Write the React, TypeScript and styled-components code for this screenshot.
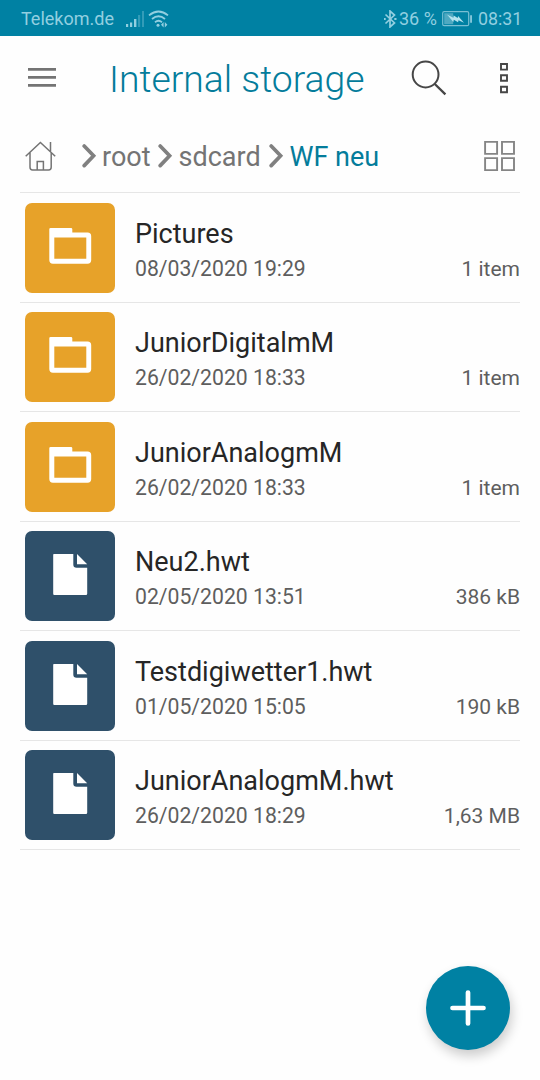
import React from "react";
import styled, { createGlobalStyle } from "styled-components";

const Global = createGlobalStyle`
  * { box-sizing: border-box; }
  body { margin: 0; background: #fefefe; font-family: Roboto, "Liberation Sans", sans-serif; }
  svg { display: block; flex: none; }
`;

const Screen = styled.main`
  height: 1080px;
  width: 540px;
  display: flex;
  flex-direction: column;
  overflow: hidden;
  background: #fefefe;
`;

const StatusBar = styled.div`
  height: 36px;
  flex: none;
  display: flex;
  align-items: center;
  padding: 2px 18px 0 21px;
  background: #0081a3;
  color: #92cfe0;
  font-size: 18px;
  line-height: 22px;
  white-space: nowrap;
`;

const Carrier = styled.span`
  width: 105px;
`;

const SignalSlot = styled.div`
  width: 22px;
`;

const BatteryLevel = styled.span`
  width: 43px;
  font-size: 18px;
`;

const Clock = styled.span`
  width: 44px;
  margin-left: 5px;
  font-size: 17.8px;
`;

const Spacer = styled.div`
  flex: 1;
`;

const Toolbar = styled.header`
  height: 84px;
  flex: none;
  display: flex;
  align-items: center;
  padding: 0 29px 0 28px;
`;

const Title = styled.h1`
  margin: 2px 0 0 53px;
  width: 302px;
  color: #047c9b;
  font-size: 37.3px;
  font-weight: 300;
  line-height: 44px;
  white-space: nowrap;
`;

const MenuDots = styled.div`
  margin-left: 53px;
`;

const Breadcrumbs = styled.nav`
  height: 73px;
  flex: none;
  display: flex;
  align-items: center;
  margin: 0 20px;
  padding: 0 4px 0 5px;
  border-bottom: 1.5px solid #e6e6e6;
`;

const Crumb = styled.span<{ $width: number; $active?: boolean }>`
  width: ${(p) => p.$width}px;
  margin-left: 5.5px;
  padding-top: 2px;
  color: ${(p) => (p.$active ? "#047c9b" : "#747474")};
  font-size: 27px;
  line-height: 32px;
  white-space: nowrap;
`;

const HomeSlot = styled.div`
  width: 55.5px;
`;

const List = styled.ul`
  list-style: none;
  margin: 0 20px;
  padding: 0;
`;

const Row = styled.li`
  height: 109.5px;
  display: flex;
  align-items: center;
  padding: 0.5px 0 0 5px;
  border-bottom: 1.5px solid #e6e6e6;
`;

const Tile = styled.div<{ $folder: boolean }>`
  width: 90px;
  height: 90px;
  flex: none;
  border-radius: 7px;
  background: ${(p) => (p.$folder ? "#e7a229" : "#2f506a")};
`;

const Details = styled.div`
  flex: 1;
  margin-left: 20px;
  padding-top: 6.5px;
`;

const Name = styled.div`
  color: #262626;
  font-size: 27px;
  line-height: 36px;
  white-space: nowrap;
`;

const Meta = styled.div`
  display: flex;
  justify-content: space-between;
  color: #5e5e5e;
  font-size: 21.2px;
  line-height: 34px;
`;

const Size = styled.span`
  font-size: 21px;
`;

const AddButton = styled.button`
  position: absolute;
  left: 426px;
  top: 966px;
  width: 84px;
  height: 84px;
  padding: 0;
  border: 0;
  border-radius: 50%;
  background: #0081a3;
  box-shadow: 2px 6px 12px rgba(0, 0, 0, 0.2);
`;

const SignalIcon = () => (
  <svg width="20" height="18" viewBox="0 0 20 18" fill="#92cfe0">
    <path d="M0 14h2.2v3H0zM4 12.5h2.2V17H4zM8 9h2.4v8H8z" />
    <path d="M12 5h2.2v12H12zM16 1h2v16h-2z" opacity=".35" />
  </svg>
);

const WifiIcon = () => (
  <svg width="22" height="18" viewBox="0 0 22 18" fill="none" stroke="#92cfe0" strokeWidth="1.8">
    <path d="M1 5.4Q10.5-2.4 20 5.4M4 9Q10.5 3.6 17 9M7 12.2Q10.5 9.4 14 12.2" />
    <circle cx="10" cy="15.3" r="1.5" fill="#92cfe0" stroke="none" />
    <path d="M15.6 12l-2.6 2.8 2.6 2.8zM16.8 12l2.6 2.8-2.6 2.8z" fill="#92cfe0" stroke="none" />
  </svg>
);

const BluetoothIcon = () => (
  <svg width="15" height="18" viewBox="0 0 15 18" fill="none" stroke="#92cfe0" strokeWidth="1.7">
    <path d="M1.5 4.5l9 8.5L6 17V1l4.5 4-9 8.5" />
    <path d="M-.5 9h2.2M10.3 9h2.2" strokeWidth="2" />
  </svg>
);

const BatteryIcon = () => (
  <svg width="31" height="16" viewBox="0 0 31 16">
    <rect x="0.7" y="0.7" width="26" height="14" rx="1.5" fill="none" stroke="#79bfd3" strokeWidth="1.2" />
    <rect x="2.2" y="2.2" width="9" height="11" fill="#4fa9c1" />
    <path d="M5 3.5l6.3 3.2.4-2.2 4 2.5.4-2L22 11.7l-5.5-2.4-.4 2-4.3-2.5-.5 2.2z" fill="#b4e3ee" />
    <path d="M28.2 4.2h1.7v7.6h-1.7z" fill="#92cfe0" />
  </svg>
);

const BurgerIcon = () => (
  <svg width="28" height="20" viewBox="0 0 28 20" fill="#747474">
    <path d="M0 0h28v2.8H0zM0 8h28v2.8H0zM0 16h28v2.8H0z" />
  </svg>
);

const SearchIcon = () => (
  <svg width="36" height="36" viewBox="0 0 36 36" fill="none" stroke="#464646" strokeWidth="2">
    <circle cx="14.6" cy="14.5" r="12.9" />
    <path d="M23.8 24l10.6 10.4" strokeWidth="2.3" />
  </svg>
);

const DotsIcon = () => (
  <svg width="9" height="32" viewBox="0 0 9 32" fill="none" stroke="#464646" strokeWidth="1.9">
    <path d="M1 2h6v5.6H1zM1 13.2h6v5.6H1zM1 24.7h6v5.6H1z" />
  </svg>
);

const HomeIcon = () => (
  <svg width="31" height="32" viewBox="0 0 31 32" fill="none" stroke="#747474" strokeWidth="1.5">
    <path d="M.7 16.2L15.4 2.5l14.8 13.7M25.5 2v9.2M5 12.5v14.8q0 2.6 2.6 2.6h16q2.6 0 2.6-2.6V12.5M12.2 29.8v-8.3h6.2v8.3" />
  </svg>
);

const ChevronIcon = () => (
  <svg width="16" height="24" viewBox="0 0 16 24" fill="none" stroke="#808080" strokeWidth="3.7">
    <path d="M3.2 2l9.4 9.8-9.4 9.8" strokeLinecap="round" />
  </svg>
);

const GridIcon = () => (
  <svg width="32" height="30" viewBox="0 0 32 30" fill="none" stroke="#858585" strokeWidth="1.9">
    <path d="M1.1.9h12v12h-12zM18 .9h12v12H18zM1.1 17.1h12v12h-12zM18 17.1h12v12H18z" />
  </svg>
);

const FolderIcon = () => (
  <svg width="90" height="90" viewBox="0 0 90 90" fill="#fff">
    <path
      fillRule="evenodd"
      d="M25.6 25H46a1.3 1.3 0 0 1 1.3 1.3v3.2h15.2q3.7 0 3.7 3.7v23.9q0 3.6-3.7 3.6H28q-3.7 0-3.7-3.6V26.3a1.3 1.3 0 0 1 1.3-1.3zM29.3 34.5v21.3h32V34.5z"
    />
  </svg>
);

const FileIcon = () => (
  <svg width="90" height="90" viewBox="0 0 90 90" fill="#fff">
    <path d="M28.8 22.9h19.5v10.6q0 3.3 3.3 3.3h10.6v26q0 1.2-1.2 1.2H29.2q-1 0-1-1.2V24q0-1.1.6-1.1z" />
    <path d="M52 23l10.2 10.3H52z" />
  </svg>
);

const PlusIcon = () => (
  <svg width="84" height="84" viewBox="0 0 84 84" stroke="#fff" strokeWidth="4.7" strokeLinecap="round">
    <path d="M26.5 42h31M42 26.5v31" />
  </svg>
);

const entries = [
  { name: "Pictures", date: "08/03/2020 19:29", size: "1 item", folder: true },
  { name: "JuniorDigitalmM", date: "26/02/2020 18:33", size: "1 item", folder: true },
  { name: "JuniorAnalogmM", date: "26/02/2020 18:33", size: "1 item", folder: true },
  { name: "Neu2.hwt", date: "02/05/2020 13:51", size: "386 kB", folder: false },
  { name: "Testdigiwetter1.hwt", date: "01/05/2020 15:05", size: "190 kB", folder: false },
  { name: "JuniorAnalogmM.hwt", date: "26/02/2020 18:29", size: "1,63 MB", folder: false },
];

export default function App() {
  return (
    <Screen>
      <Global />
      <StatusBar>
        <Carrier>Telekom.de</Carrier>
        <SignalSlot>
          <SignalIcon />
        </SignalSlot>
        <WifiIcon />
        <Spacer />
        <BluetoothIcon />
        <BatteryLevel>36 %</BatteryLevel>
        <BatteryIcon />
        <Clock>08:31</Clock>
      </StatusBar>
      <Toolbar>
        <BurgerIcon />
        <Title>Internal storage</Title>
        <SearchIcon />
        <MenuDots>
          <DotsIcon />
        </MenuDots>
      </Toolbar>
      <Breadcrumbs>
        <HomeSlot>
          <HomeIcon />
        </HomeSlot>
        <ChevronIcon />
        <Crumb $width={55}>root</Crumb>
        <ChevronIcon />
        <Crumb $width={89.5}>sdcard</Crumb>
        <ChevronIcon />
        <Crumb $width={100} $active>
          WF neu
        </Crumb>
        <Spacer />
        <GridIcon />
      </Breadcrumbs>
      <List>
        {entries.map((entry) => (
          <Row key={entry.name}>
            <Tile $folder={entry.folder}>{entry.folder ? <FolderIcon /> : <FileIcon />}</Tile>
            <Details>
              <Name>{entry.name}</Name>
              <Meta>
                <span>{entry.date}</span>
                <Size>{entry.size}</Size>
              </Meta>
            </Details>
          </Row>
        ))}
      </List>
      <AddButton aria-label="Add">
        <PlusIcon />
      </AddButton>
    </Screen>
  );
}
